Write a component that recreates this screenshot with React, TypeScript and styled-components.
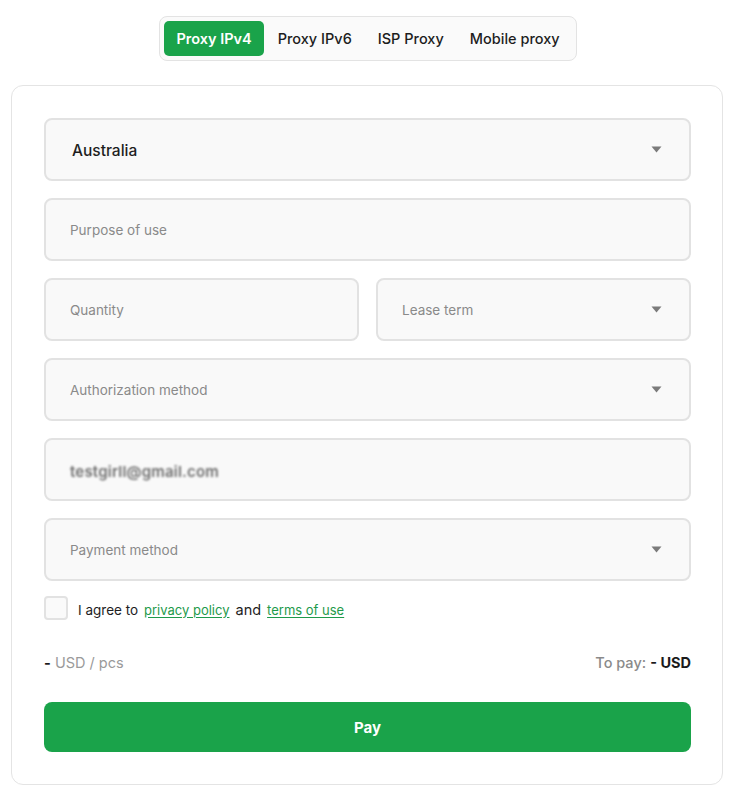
import React from "react";
import styled, { createGlobalStyle } from "styled-components";

const Global = createGlobalStyle`
  html, body { margin: 0; padding: 0; background: #ffffff; }
  body { font-family: Inter, "Noto Sans", sans-serif; color: #1b1b1b; }
  * { box-sizing: border-box; }
`;

const Page = styled.div`
  width: 736px;
  padding: 16px 13px 10px 11px;
  display: flex;
  flex-direction: column;
  align-items: center;
`;

const Tabs = styled.div`
  display: flex;
  gap: 2px;
  padding: 4px;
  border: 1px solid #e3e3e3;
  border-radius: 8px;
  background: #fafafa;
  margin-left: 2px;
`;

const Tab = styled.div<{ $active?: boolean }>`
  height: 35px;
  padding: 0 12px;
  display: flex;
  align-items: center;
  border-radius: 5px;
  font-size: 14.5px;
  font-weight: ${(p) => (p.$active ? 600 : 500)};
  color: ${(p) => (p.$active ? "#ffffff" : "#1d1d1d")};
  background: ${(p) => (p.$active ? "#1aa34a" : "transparent")};
`;

const Card = styled.div`
  margin-top: 24px;
  width: 712px;
  border: 1px solid #e4e4e4;
  border-radius: 12px;
  padding: 32px 31px 32px 32px;
  display: flex;
  flex-direction: column;
  gap: 17px;
`;

const Row = styled.div`
  display: grid;
  grid-template-columns: 1fr 1fr;
  gap: 17px;
`;

const Field = styled.div`
  height: 63px;
  border: 2px solid #e2e2e2;
  border-radius: 8px;
  background: #f9f9f9;
  display: flex;
  align-items: center;
  justify-content: space-between;
  padding: 0 24px 0 24px;
`;

const Value = styled.span`
  font-size: 15.5px;
  font-weight: 500;
  color: #1e1e1e;
  padding-left: 2px;
  margin-top: 2px;
`;

const Placeholder = styled.span`
  font-size: 13.5px;
  color: #8a8a8a;
`;

const Blurred = styled.span`
  font-size: 15px;
  font-weight: 600;
  color: #6f6f6f;
  filter: blur(1.3px);
  letter-spacing: 0.2px;
  margin-top: 4px;
`;

const Caret = styled.svg`
  width: 11px;
  height: 7px;
  margin-right: 3px;
`;

const Arrow = () => (
  <Caret viewBox="0 0 11 7">
    <path d="M0.5 0.5 H10.5 L5.5 6.5 Z" fill="#7b7b7b" />
  </Caret>
);

const AgreeRow = styled.label`
  display: flex;
  align-items: center;
  gap: 10px;
  font-size: 13.5px;
  color: #1e1e1e;
`;

const Check = styled.span`
  width: 24px;
  height: 24px;
  border: 2px solid #e2e2e2;
  border-radius: 4px;
  background: #fafafa;
  margin-top: -2px;
`;

const AgreeText = styled.span`
  display: flex;
  gap: 6px;
  align-items: baseline;
`;

const Link = styled.a`
  color: #1e9a4b;
  text-decoration: underline;
  text-underline-offset: 2px;
  font-size: 13px;
`;

const And = styled.span`
  font-size: 14.5px;
  font-weight: 400;
`;

const PriceRow = styled.div`
  display: flex;
  justify-content: space-between;
  align-items: center;
  margin-top: 17px;
  font-size: 14.5px;
`;

const Muted = styled.span<{ $dark?: boolean }>`
  color: ${(p) => (p.$dark ? "#8a8a8a" : "#9a9a9a")};
  font-weight: ${(p) => (p.$dark ? 500 : 400)};
`;

const Strong = styled.span`
  color: #1b1b1b;
  font-weight: 700;
`;

const PayButton = styled.button`
  margin-top: 14px;
  height: 50px;
  border: none;
  border-radius: 8px;
  background: #1aa34a;
  color: #ffffff;
  font-family: Inter, "Noto Sans", sans-serif;
  font-size: 15px;
  font-weight: 700;
`;

export default function App() {
  return (
    <>
      <Global />
      <Page>
        <Tabs>
          <Tab $active>Proxy IPv4</Tab>
          <Tab>Proxy IPv6</Tab>
          <Tab>ISP Proxy</Tab>
          <Tab>Mobile proxy</Tab>
        </Tabs>
        <Card>
          <Field>
            <Value>Australia</Value>
            <Arrow />
          </Field>
          <Field>
            <Placeholder>Purpose of use</Placeholder>
          </Field>
          <Row>
            <Field>
              <Placeholder>Quantity</Placeholder>
            </Field>
            <Field>
              <Placeholder>Lease term</Placeholder>
              <Arrow />
            </Field>
          </Row>
          <Field>
            <Placeholder>Authorization method</Placeholder>
            <Arrow />
          </Field>
          <Field>
            <Blurred>testgirll@gmail.com</Blurred>
          </Field>
          <Field>
            <Placeholder>Payment method</Placeholder>
            <Arrow />
          </Field>
          <AgreeRow>
            <Check />
            <AgreeText>
              <span>I agree to</span>
              <Link>privacy policy</Link>
              <And>and</And>
              <Link>terms of use</Link>
            </AgreeText>
          </AgreeRow>
          <PriceRow>
            <span>
              <Strong>-</Strong> <Muted>USD / pcs</Muted>
            </span>
            <span>
              <Muted $dark>To pay:</Muted> <Strong>- USD</Strong>
            </span>
          </PriceRow>
          <PayButton>Pay</PayButton>
        </Card>
      </Page>
    </>
  );
}
